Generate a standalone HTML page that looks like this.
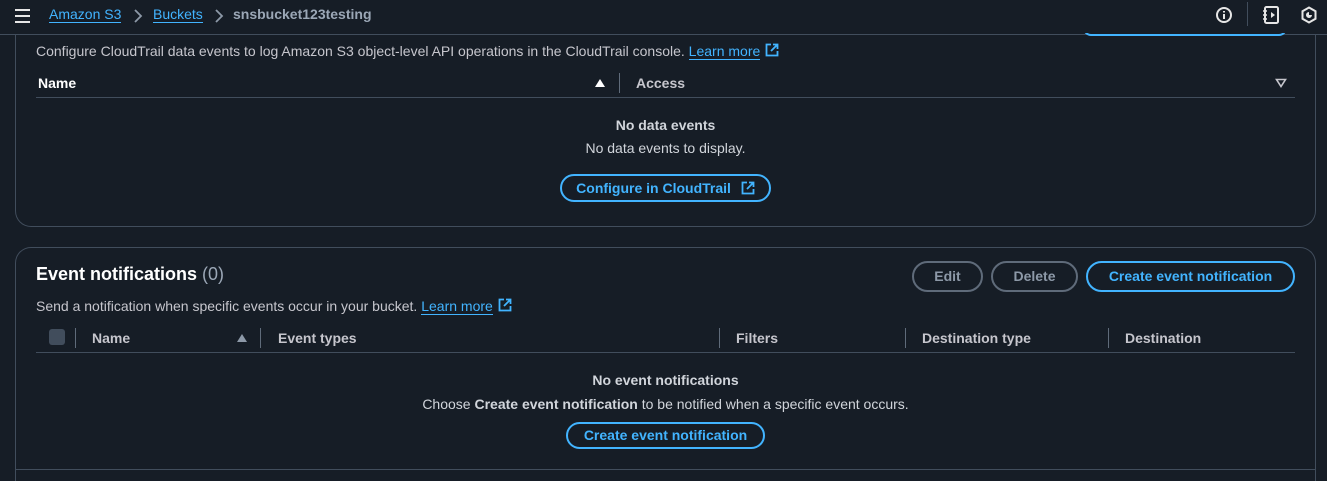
<!DOCTYPE html>
<html style="width:1327px;height:481px;overflow:hidden"><head><meta charset="utf-8"><style>
*{margin:0;padding:0;box-sizing:border-box}
body{width:1327px;height:481px;background:#161d26;font-family:"Liberation Sans",sans-serif;color:#d1d5db;font-size:14px;position:relative;overflow:hidden}
.a{position:absolute;white-space:nowrap}
.b{font-weight:bold}
.lnk{color:#42b4ff;border-bottom:1px solid #42b4ff;line-height:16px}
.btn{position:absolute;border:2px solid #42b4ff;border-radius:16px;color:#42b4ff;font-weight:bold;text-align:center;font-size:14px}
.gbtn{position:absolute;border:2px solid #5f6b7a;border-radius:16px;color:#8d99a8;font-weight:bold;text-align:center;font-size:14px}
.sep{position:absolute;width:1px;height:20px;background:#5f6b7a}
.hl{position:absolute;height:1px;background:#414d5c}
.th{color:#c6c6cd;font-weight:bold}
.ext{vertical-align:-1px;margin-left:5px}
</style></head><body>
<div class="a" style="left:15px;top:9px;width:15px;height:14px">
<div style="height:2px;background:#e6e6e6;margin-bottom:4px"></div><div style="height:2px;background:#e6e6e6;margin-bottom:4px"></div><div style="height:2px;background:#e6e6e6"></div></div>
<div class="a lnk" style="left:49px;top:6px;font-size:14px">Amazon S3</div>
<svg class="a" style="left:133px;top:9px" width="10" height="14"><path d="M2 1l6 6-6 6" stroke="#8d99a8" stroke-width="1.8" fill="none"/></svg>
<div class="a lnk" style="left:153px;top:6px;font-size:14px">Buckets</div>
<svg class="a" style="left:214px;top:9px" width="10" height="14"><path d="M2 1l6 6-6 6" stroke="#8d99a8" stroke-width="1.8" fill="none"/></svg>
<div class="a b" style="left:233px;top:6px;color:#9ba7b6;font-size:14px">snsbucket123testing</div>
<svg class="a" style="left:1215px;top:6px" width="18" height="18"><circle cx="9" cy="9" r="7" stroke="#e6e6e6" stroke-width="2" fill="none"/><path d="M9 8v5M9 5v1.5" stroke="#e6e6e6" stroke-width="2"/></svg>
<div class="a" style="left:1247px;top:2px;width:1px;height:24px;background:#414d5c"></div>
<svg class="a" style="left:1262px;top:6px" width="18" height="18"><rect x="3" y="1" width="13" height="16" rx="1.5" stroke="#e6e6e6" stroke-width="2" fill="none"/><path d="M1 5h4M1 9h4M1 13h4" stroke="#e6e6e6" stroke-width="1.6"/><path d="M9 6l4 3-4 3z" fill="#e6e6e6"/></svg>
<svg class="a" style="left:1300px;top:6px" width="18" height="18"><path d="M9 1.5l6.5 3.75v7.5L9 16.5 2.5 12.75v-7.5z" stroke="#e6e6e6" stroke-width="2" fill="none"/><path d="M9 6a3 3 0 1 0 3 3H9z" fill="#e6e6e6"/></svg>
<div class="hl" style="left:0;top:34px;width:1327px"></div>
<div class="a" style="left:1083px;top:28px;width:204px;height:8px;border:2px solid #42b4ff;border-top:none;border-radius:0 0 16px 16px;clip-path:inset(5px 0 0 0)"></div>
<div class="a" style="left:15px;top:35px;width:1301px;height:192px;border:1px solid #414d5c;border-top:none;border-radius:0 0 16px 16px"></div>
<div class="a" style="left:36px;top:43px;color:#c6c6cd">Configure CloudTrail data events to log Amazon S3 object-level API operations in the CloudTrail console. <span class="lnk">Learn more</span><svg class="ext" width="14" height="14"><path d="M6 1.5H1.5v11h11V8" stroke="#42b4ff" stroke-width="1.8" fill="none"/><path d="M8 1.5h4.5V6M12.5 1.5L6 8" stroke="#42b4ff" stroke-width="1.8" fill="none"/></svg></div>
<div class="a th" style="left:38px;top:75px;color:#fff">Name</div>
<svg class="a" style="left:594px;top:78px" width="12" height="10"><path d="M1 9h10L6 1z" fill="#fff"/></svg>
<div class="sep" style="left:619px;top:73px"></div>
<div class="a th" style="left:636px;top:75px">Access</div>
<svg class="a" style="left:1275px;top:78px" width="12" height="10"><path d="M1.5 1.5h9L6 8.5z" stroke="#c6c6cd" stroke-width="1.6" fill="none"/></svg>
<div class="hl" style="left:36px;top:97px;width:1259px"></div>
<div class="a b" style="left:0;width:1331px;text-align:center;top:117px">No data events</div>
<div class="a" style="left:0;width:1331px;text-align:center;top:140px">No data events to display.</div>
<div class="btn" style="left:560px;top:174px;width:211px;height:28px;line-height:24px">Configure in CloudTrail <svg style="vertical-align:-2px;margin-left:6px" width="14" height="14"><path d="M6 1.5H1.5v11h11V8" stroke="#42b4ff" stroke-width="1.8" fill="none"/><path d="M8 1.5h4.5V6M12.5 1.5L6 8" stroke="#42b4ff" stroke-width="1.8" fill="none"/></svg></div>
<div class="a" style="left:15px;top:247px;width:1301px;height:234px;border:1px solid #414d5c;border-bottom:none;border-radius:16px 16px 0 0"></div>
<div class="a b" style="left:36px;top:264px;font-size:18px;color:#fff">Event notifications <span style="font-weight:normal;color:#9ba7b6">(0)</span></div>
<div class="gbtn" style="left:912px;top:261px;width:71px;height:31px;line-height:27px">Edit</div>
<div class="gbtn" style="left:991px;top:261px;width:87px;height:31px;line-height:27px">Delete</div>
<div class="btn" style="left:1086px;top:261px;width:209px;height:31px;line-height:27px">Create event notification</div>
<div class="a" style="left:36px;top:298px;color:#c6c6cd">Send a notification when specific events occur in your bucket. <span class="lnk">Learn more</span><svg class="ext" width="14" height="14"><path d="M6 1.5H1.5v11h11V8" stroke="#42b4ff" stroke-width="1.8" fill="none"/><path d="M8 1.5h4.5V6M12.5 1.5L6 8" stroke="#42b4ff" stroke-width="1.8" fill="none"/></svg></div>
<div class="a" style="left:49px;top:329px;width:16px;height:16px;background:#414d5c;border-radius:3px"></div>
<div class="sep" style="left:75px;top:328px"></div>
<div class="a th" style="left:92px;top:330px">Name</div>
<svg class="a" style="left:236px;top:333px" width="12" height="10"><path d="M1 9h10L6 1z" fill="#8d99a8"/></svg>
<div class="sep" style="left:260px;top:328px"></div>
<div class="a th" style="left:278px;top:330px">Event types</div>
<div class="sep" style="left:719px;top:328px"></div>
<div class="a th" style="left:736px;top:330px">Filters</div>
<div class="sep" style="left:905px;top:328px"></div>
<div class="a th" style="left:922px;top:330px">Destination type</div>
<div class="sep" style="left:1108px;top:328px"></div>
<div class="a th" style="left:1125px;top:330px">Destination</div>
<div class="hl" style="left:36px;top:352px;width:1259px"></div>
<div class="a b" style="left:0;width:1331px;text-align:center;top:372px">No event notifications</div>
<div class="a" style="left:0;width:1331px;text-align:center;top:396px">Choose <b>Create event notification</b> to be notified when a specific event occurs.</div>
<div class="btn" style="left:566px;top:422px;width:199px;height:27px;line-height:23px">Create event notification</div>
<div class="hl" style="left:16px;top:469px;width:1299px"></div>
</body></html>
